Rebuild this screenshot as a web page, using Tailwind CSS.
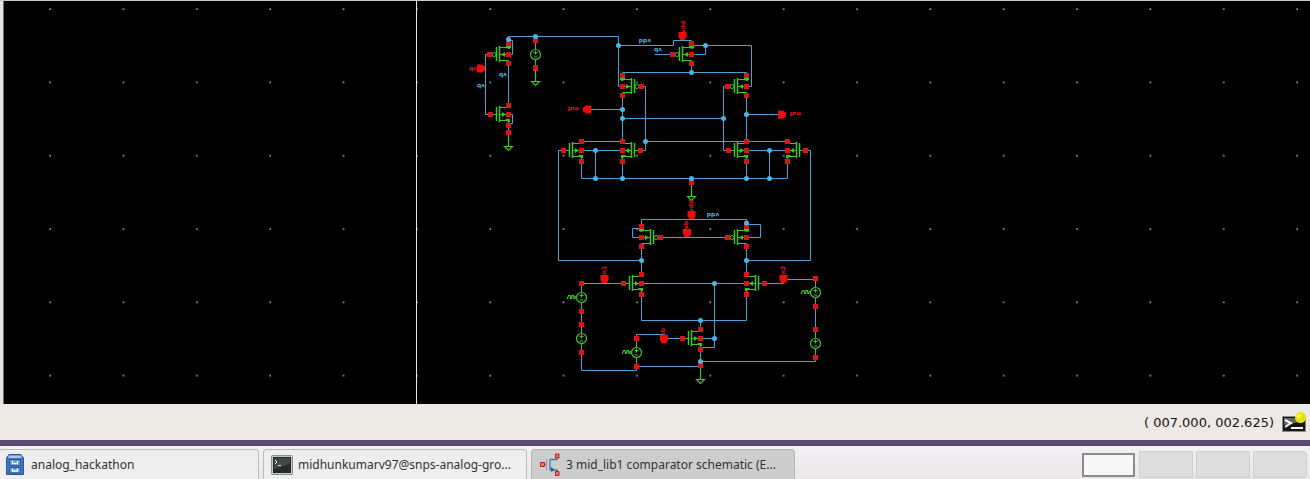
<!DOCTYPE html>
<html lang="en">
<head>
<meta charset="utf-8">
<title>3 mid_lib1 comparator schematic</title>
<script src="https://cdn.jsdelivr.net/npm/@tailwindcss/browser@4"></script>
</head>
<body class="flex min-h-screen flex-col overflow-x-hidden bg-[#edeae5] font-['Noto_Sans','Open_Sans',sans-serif]">
<main class="border-t border-[#c9c7c4] bg-black">
<svg viewBox="0 1 1310 403" class="block h-auto w-full" role="img" aria-label="Comparator schematic">
  <defs>
    <pattern id="grid" x="49" y="8" width="73.35" height="73.3" patternUnits="userSpaceOnUse"><rect x=".5" y=".5" width="1.3" height="1.3" fill="#fff"/></pattern>
    <g id="fet" fill="none" stroke="#3fc426">
      <path d="M-11.5-7V7M-8.5-8V8" stroke-width="1.5"/>
      <path d="M-8-6.5H.5V-9M-8 6.5H.5V9M-8 .5H0"/>
    </g>
    <g id="nmos">
      <use href="#fet"/>
      <path d="M-17 .5H-12" stroke="#3fc426"/>
      <path d="M-6-2L-2 .5L-6 3ZM-3 5H2V8H0Z" fill="#3fc426"/>
      <path d="M-20-2h5v5h-5ZM-2-2h5v5h-5ZM-2-11h5v5h-5ZM-2 9h5v5h-5Z" fill="#d81414"/>
    </g>
    <g id="pmos">
      <use href="#fet"/>
      <circle cx="-14" cy=".5" r="2" fill="none" stroke="#3fc426"/>
      <path d="M-3-2L-7 .5L-3 3ZM-2-8H3V-6L1-5L-2-6Z" fill="#3fc426"/>
      <path d="M-21-2h5v5h-5ZM-2-2h5v5h-5ZM-2-13h5v5h-5ZM-2 7h5v5h-5Z" fill="#d81414"/>
    </g>
    <g id="src">
      <path d="M.5-12V-5M.5 6V12M-1.500-1.500H2.500M.5-3.500V.5M-1 3H2" stroke="#3fc426"/>
      <circle cx=".5" cy=".5" r="5" fill="none" stroke="#3fc426" stroke-width="1.2"/>
      <path d="M-2-16h5v5h-5ZM-2 12h5v5h-5Z" fill="#d81414"/>
    </g>
    <path id="sine" d="M-13.500 2V1L-12.500-1.500H-11L-10.500 1.500H-9.500L-9-1.500H-7.500L-7 1.500H-6L-5.500-1" fill="none" stroke="#3fc426" stroke-width="1.2"/>
    <g id="gnd">
      <path d="M.5 0V14M-3.500 14.500H4.500L.5 18.500Z" fill="none" stroke="#3fc426" stroke-width="1.2"/>
      <path d="M-2-2h5v5h-5Z" fill="#d81414"/>
    </g>
    <path id="port" d="M-4-4H4V1L2 4H-2L-4 1Z" fill="#f00a0a"/>
  </defs>
  <path d="M0 1H3.500V404H0Z" fill="#e4e2df"/>
  <rect x="4" y="5" width="410" height="399" fill="url(#grid)"/>
  <rect x="417" y="5" width="893" height="399" fill="url(#grid)"/>
  <path d="M416.500 1V404" stroke="#e8e8e8"/>

  <g fill="none" stroke="#4e9fd1" transform="translate(.5 .5)">
    <path d="M508 43V36H618V86H622M508 40H512V54H508M535 36V40M508 63V104M489 54H485V114H489M508 114H512V123H508M508 124V132"/>
    <path d="M618 45H673V40H691V45H751V86H746M705 45V54H691M654 54H673M691 63V72M622 76V72H746V76"/>
    <path d="M622 95V141M587 109H622V118H723M728 86H723V150H728M641 86H645V150H641M645 141H787M581 141H622M746 95V141M746 114H780"/>
    <path d="M581 150H622M746 150H787M595 150V178M769 150V178M581 161V178H787V161M622 161V178M746 161V178M691 178V182"/>
    <path d="M563 150H558V260H641M806 150H810V260H746M641 226V219H746V226M746 224H760V237H746M641 228H632V237H641M659 237H728M641 246V274M746 246V274"/>
    <path d="M641 283H746M714 283V347H700M700 338H714M641 294V320H746V294M700 320V329M700 349V366M700 361H815V357M636 366H700M581 352V370H636V366"/>
    <path d="M636 338V334H664V338H682M581 283H622M764 283H783V279H815M815 306V329M581 311V324"/>
  </g>

  <use href="#pmos" x="508" y="54"/><use href="#pmos" x="691" y="54"/><use href="#pmos" x="746" y="86"/><use href="#pmos" x="746" y="237"/>
  <use href="#pmos" transform="translate(623 86) scale(-1 1)"/><use href="#pmos" transform="translate(642 237) scale(-1 1)"/>
  <use href="#nmos" x="508" y="114"/><use href="#nmos" x="581" y="150"/><use href="#nmos" x="746" y="150"/><use href="#nmos" x="641" y="283"/><use href="#nmos" x="700" y="338"/>
  <use href="#nmos" transform="translate(623 150) scale(-1 1)"/><use href="#nmos" transform="translate(788 150) scale(-1 1)"/><use href="#nmos" transform="translate(747 283) scale(-1 1)"/>
  <use href="#src" x="535" y="54"/><use href="#src" x="581" y="297"/><use href="#src" x="581" y="338"/><use href="#src" x="636" y="352"/><use href="#src" x="815" y="292"/><use href="#src" x="815" y="343"/>
  <use href="#sine" x="581" y="297"/><use href="#sine" x="636" y="352"/><use href="#sine" x="815" y="292"/>
  <use href="#gnd" x="508" y="132"/><use href="#gnd" x="535" y="67"/><use href="#gnd" x="691" y="182"/><use href="#gnd" x="700" y="365"/>

  <g fill="#4cb4e8">
    <circle cx="508.500" cy="39.500" r="2.500"/><circle cx="535.500" cy="36.500" r="2.500"/><circle cx="618.500" cy="45.500" r="2.500"/><circle cx="705.500" cy="45.500" r="2.500"/>
    <circle cx="691.500" cy="72.500" r="2.500"/><circle cx="622.500" cy="109.500" r="2.500"/><circle cx="622.500" cy="118.500" r="2.500"/><circle cx="723.500" cy="118.500" r="2.500"/>
    <circle cx="746.500" cy="114.500" r="2.500"/><circle cx="645.500" cy="141.500" r="2.500"/><circle cx="595.500" cy="150.500" r="2.500"/><circle cx="769.500" cy="150.500" r="2.500"/>
    <circle cx="595.500" cy="178.500" r="2.500"/><circle cx="622.500" cy="178.500" r="2.500"/><circle cx="691.500" cy="178.500" r="2.500"/><circle cx="746.500" cy="178.500" r="2.500"/><circle cx="769.500" cy="178.500" r="2.500"/>
    <circle cx="746.500" cy="223" r="2.500"/><circle cx="641.500" cy="260.500" r="2.500"/><circle cx="746.500" cy="260.500" r="2.500"/><circle cx="714.500" cy="283.500" r="2.500"/>
    <circle cx="714.500" cy="338.500" r="2.500"/><circle cx="700.500" cy="320.500" r="2.500"/><circle cx="700.500" cy="361.500" r="2.500"/>
  </g>

  <use href="#port" x="682.500" y="36"/><use href="#port" x="691.500" y="215"/><use href="#port" x="687" y="233"/><use href="#port" x="604.500" y="279"/><use href="#port" x="664" y="339"/><use href="#port" x="783.500" y="279"/>
  <use href="#port" transform="translate(481 68.500) rotate(-90)"/><use href="#port" transform="translate(587 109.500) rotate(90)"/><use href="#port" transform="translate(782 114.500) rotate(-90)"/>

  <g class="font-['DejaVu_Sans',sans-serif] text-[6px] font-bold" text-anchor="middle" fill="#e01616">
    <text transform="translate(685 27) rotate(-90)">vdd</text>
    <text transform="translate(693 206) rotate(-90)">vdd</text>
    <text transform="translate(688 225) rotate(-90)">vb</text>
    <text transform="translate(606 271) rotate(-90)">in1</text>
    <text transform="translate(785 271) rotate(-90)">in2</text>
    <text transform="translate(665 332) rotate(-90)">vb</text>
    <text transform="translate(473 67) rotate(180)">vb</text>
    <text transform="translate(573 107) rotate(180)">out</text>
    <text transform="translate(795 112) rotate(180)">out</text>
    <g fill="#55a9dc">
      <text transform="translate(645 39) rotate(180)">vdd</text>
      <text transform="translate(713 213) rotate(180)">vdd</text>
      <text transform="translate(658 48) rotate(180)">vb</text>
      <text transform="translate(481 84) rotate(180)">vb</text>
      <text transform="translate(503 73) rotate(180)">vb</text>
    </g>
  </g>
</svg>
</main>

<div class="flex h-9 items-center justify-end gap-2 pt-px pr-[3px] font-['DejaVu_Sans',sans-serif] text-[13px] text-[#151515]">
  <output class="whitespace-pre">( 007.000, 002.625)</output>
  <button type="button" aria-label="Console">
    <svg width="25" height="22" viewBox="0 0 25 22">
      <rect x=".5" y="4.500" width="23" height="15" fill="#161616" stroke="#8b8b8b"/>
      <path d="M2 6H22V9L2 13Z" fill="#666"/>
      <path d="M3 8L9 11L3 15" fill="none" stroke="#fff" stroke-width="2"/><path d="M9 16H21" stroke="#fff" stroke-width="2"/>
      <circle cx="18.500" cy="5.500" r="5.500" fill="#e5e30e"/><circle cx="17" cy="4" r="2.500" fill="#f6f547"/>
    </svg>
  </button>
</div>
<div class="h-[6px] border-b border-[#51455f] bg-[#5d4a73]"></div>

<nav class="flex flex-1 items-stretch bg-linear-to-b from-[#f3f1f4] to-[#e9e7e8] pt-[3px] text-[12px] text-[#2f3335]" aria-label="Taskbar">
  <button type="button" class="flex h-[30px] w-[259px] items-center gap-[7px] rounded-tr border-t border-r border-[#bdbbbb] bg-[#efeeee] pl-[6px] text-left">
    <svg width="18" height="21" viewBox="0 0 18 21">
      <path d="M3 .5H15L17.500 4V20.500H.5V4Z" fill="#4477bd" stroke="#2b589a"/>
      <path d="M3 1.500H15L16 4H2Z" fill="#a6c5ed"/>
      <path d="M3.500 5.500H14.500V11.500H3.500ZM3.500 13.500H14.500V19H3.500Z" fill="#6695d4" stroke="#2b589a"/>
      <path d="M6.500 7V9.500H11.500V7M6.500 14.500V17H11.500V14.500" fill="none" stroke="#fff" stroke-width="1.300"/>
    </svg>
    <span class="pt-px">analog_hackathon</span>
  </button>
  <button type="button" class="ml-1 flex h-[30px] w-[264px] items-center gap-[5px] rounded-t border border-b-0 border-[#bdbbbb] bg-[#efeeee] pl-[7px] text-left">
    <svg width="22" height="20" viewBox="0 0 22 20">
      <rect x=".5" y=".5" width="21" height="19" rx="1" fill="#c5c6c3" stroke="#8d8f8b"/>
      <rect x="2" y="2" width="18" height="16" fill="#242c2b"/><path d="M3 3H19V9L3 14Z" fill="#414946"/>
      <path d="M4 5L6 7L4 9M7 10.500H10" fill="none" stroke="#e6e9e6"/>
    </svg>
    <span class="pt-px whitespace-nowrap">midhunkumarv97@snps-analog-gro...</span>
  </button>
  <button type="button" aria-pressed="true" class="ml-1 flex h-[30px] w-[264px] items-center gap-[6px] rounded-t border border-b-0 border-[#b4b2b2] bg-[#cecdcd] pl-2 text-left">
    <svg width="20" height="23" viewBox="0 0 20 23">
      <path d="M3 11.500H6M6.500 6V17" stroke="#7993b3" fill="none"/>
      <path d="M17 4V6.500H10V17H17V20M10 16.500H13" stroke="#4779aa" stroke-width="1.300" fill="none"/><path d="M11 14L15 17L11 19Z" fill="#2d649d"/>
      <path d="M.5 9.500H4.500V13.500H.5ZM15.500 1H19V5H15.500ZM15.500 18.500H19V22.500H15.500Z" fill="#f07470" stroke="#c8191b"/>
    </svg>
    <span class="pt-px whitespace-nowrap">3 mid_lib1 comparator schematic (E...</span>
  </button>
  <div class="ml-auto flex gap-[3px] pt-[2px] pr-[3px]">
    <button type="button" aria-label="Workspace 1" aria-pressed="true" class="mt-[2px] mr-[1px] h-6 w-[53px] border-2 border-[#8b8b8b] bg-[#f7f7f7]"></button>
    <button type="button" aria-label="Workspace 2" class="h-[27px] w-[54px] border border-[#cfcece] bg-[#dedede]"></button>
    <button type="button" aria-label="Workspace 3" class="h-[27px] w-[54px] border border-[#cfcece] bg-[#dedede]"></button>
    <button type="button" aria-label="Workspace 4" class="h-[27px] w-[54px] rounded-r border border-[#cfcece] bg-[#dedede]"></button>
  </div>
</nav>
</body>
</html>
